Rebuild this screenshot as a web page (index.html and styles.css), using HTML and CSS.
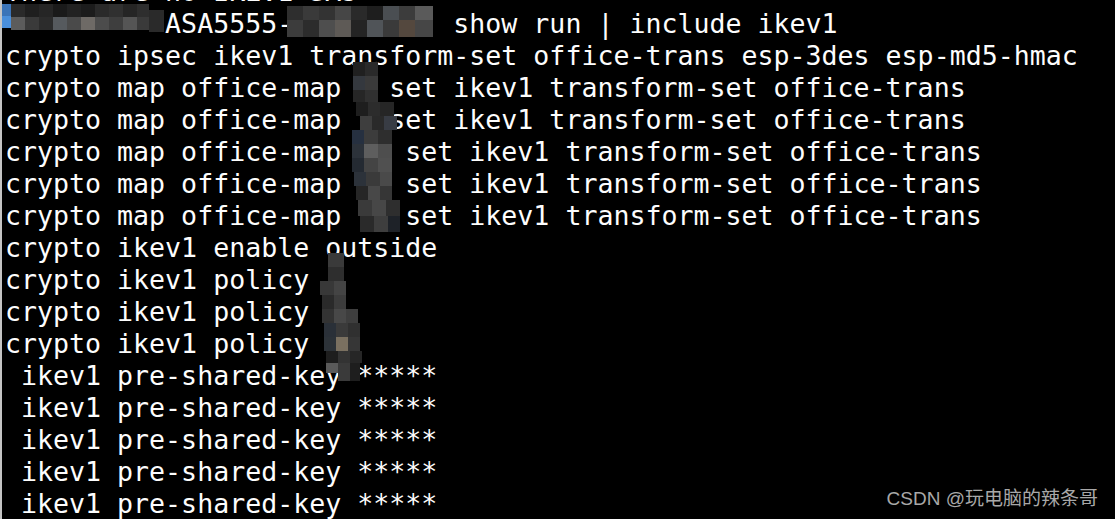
FILE: index.html
```html
<!DOCTYPE html>
<html lang="en">
<head>
<meta charset="utf-8">
<title>Terminal</title>
<link rel="stylesheet" href="styles.css">
</head>
<body>
<main class="terminal">
<pre class="output">There are no IKEv1 SAs
          ASA5555-          show run | include ikev1
crypto ipsec ikev1 transform-set office-trans esp-3des esp-md5-hmac
crypto map office-map   set ikev1 transform-set office-trans
crypto map office-map   set ikev1 transform-set office-trans
crypto map office-map    set ikev1 transform-set office-trans
crypto map office-map    set ikev1 transform-set office-trans
crypto map office-map    set ikev1 transform-set office-trans
crypto ikev1 enable outside
crypto ikev1 policy
crypto ikev1 policy
crypto ikev1 policy
 ikev1 pre-shared-key *****
 ikev1 pre-shared-key *****
 ikev1 pre-shared-key *****
 ikev1 pre-shared-key *****
 ikev1 pre-shared-key *****</pre>
<svg class="mosaic" width="1115" height="519" viewBox="0 0 1115 519" aria-hidden="true">
  <!-- cursor -->
  <rect x="1" y="4" width="10" height="12" fill="#3b74b8"/>
  <rect x="1" y="16" width="10" height="12" fill="#4a8fdb"/>
  <!-- hostname mosaic -->
  <rect x="11" y="4" width="14" height="13" fill="#2a2a2a"/>
  <rect x="25" y="4" width="14" height="13" fill="#1f1f1f"/>
  <rect x="39" y="4" width="14" height="13" fill="#262626"/>
  <rect x="53" y="4" width="14" height="13" fill="#1a1a1a"/>
  <rect x="67" y="4" width="14" height="13" fill="#222222"/>
  <rect x="81" y="4" width="14" height="13" fill="#1c1c1c"/>
  <rect x="95" y="4" width="14" height="13" fill="#2a2a2a"/>
  <rect x="109" y="4" width="14" height="13" fill="#303030"/>
  <rect x="123" y="4" width="14" height="13" fill="#252525"/>
  <rect x="137" y="4" width="12" height="13" fill="#2e2e2e"/>
  <rect x="11" y="17" width="14" height="13" fill="#5c5c5c"/>
  <rect x="25" y="17" width="14" height="13" fill="#3a3a3a"/>
  <rect x="39" y="17" width="14" height="13" fill="#2c2c2c"/>
  <rect x="53" y="17" width="14" height="13" fill="#565a5e"/>
  <rect x="67" y="17" width="14" height="13" fill="#4a4a4a"/>
  <rect x="81" y="17" width="14" height="13" fill="#6e6a66"/>
  <rect x="95" y="17" width="14" height="13" fill="#4c4c4c"/>
  <rect x="109" y="17" width="14" height="13" fill="#3e3e3e"/>
  <rect x="123" y="17" width="14" height="13" fill="#555555"/>
  <rect x="137" y="17" width="12" height="13" fill="#3a3a3a"/>
  <rect x="149" y="10" width="15" height="22" fill="#2a2a2a"/>
  <!-- suffix mosaic -->
  <rect x="287" y="6" width="16" height="14" fill="#2e2e2e"/>
  <rect x="303" y="6" width="16" height="14" fill="#3a3a3a"/>
  <rect x="319" y="6" width="16" height="14" fill="#333333"/>
  <rect x="335" y="6" width="16" height="14" fill="#464646"/>
  <rect x="351" y="6" width="16" height="14" fill="#2a2a2a"/>
  <rect x="367" y="6" width="16" height="14" fill="#1e1e1e"/>
  <rect x="383" y="6" width="16" height="14" fill="#4a4e52"/>
  <rect x="399" y="6" width="16" height="14" fill="#3c3c3c"/>
  <rect x="415" y="6" width="18" height="14" fill="#5a5a5a"/>
  <rect x="287" y="20" width="16" height="17" fill="#3c3c3c"/>
  <rect x="303" y="20" width="16" height="17" fill="#2c2c2c"/>
  <rect x="319" y="20" width="16" height="17" fill="#4e4e4e"/>
  <rect x="335" y="20" width="16" height="17" fill="#5e5a56"/>
  <rect x="351" y="20" width="16" height="17" fill="#242424"/>
  <rect x="367" y="20" width="16" height="17" fill="#505458"/>
  <rect x="383" y="20" width="16" height="17" fill="#3a3a3a"/>
  <rect x="399" y="20" width="16" height="17" fill="#54483e"/>
  <rect x="415" y="20" width="18" height="17" fill="#464646"/>
  <!-- crypto map numbers -->
  <rect x="353" y="62" width="12" height="14" fill="#202020"/>
  <rect x="365" y="62" width="13" height="14" fill="#2a2a2a"/>
  <rect x="353" y="76" width="12" height="14" fill="#34383e"/>
  <rect x="365" y="76" width="13" height="14" fill="#3a3a3a"/>
  <rect x="353" y="90" width="12" height="12" fill="#262626"/>
  <rect x="365" y="90" width="13" height="12" fill="#303030"/>
  <rect x="356" y="102" width="12" height="14" fill="#1e1e1e"/>
  <rect x="368" y="102" width="12" height="14" fill="#2c2c2c"/>
  <rect x="380" y="102" width="14" height="14" fill="#262626"/>
  <rect x="360" y="116" width="12" height="14" fill="#3e3e3e"/>
  <rect x="372" y="116" width="12" height="14" fill="#2a2a2a"/>
  <rect x="384" y="116" width="13" height="14" fill="#383c44"/>
  <rect x="352" y="130" width="12" height="14" fill="#263040"/>
  <rect x="364" y="130" width="14" height="14" fill="#3c3c3c"/>
  <rect x="378" y="130" width="14" height="14" fill="#2e2e2e"/>
  <rect x="352" y="144" width="12" height="14" fill="#2c323a"/>
  <rect x="364" y="144" width="14" height="14" fill="#5e5e5e"/>
  <rect x="378" y="144" width="14" height="14" fill="#4e4e4e"/>
  <rect x="352" y="158" width="12" height="14" fill="#242a32"/>
  <rect x="364" y="158" width="14" height="14" fill="#444444"/>
  <rect x="378" y="158" width="14" height="14" fill="#505050"/>
  <rect x="354" y="172" width="12" height="14" fill="#2c323a"/>
  <rect x="366" y="172" width="14" height="14" fill="#3a3a3a"/>
  <rect x="380" y="172" width="12" height="14" fill="#4a4a4a"/>
  <rect x="356" y="186" width="12" height="14" fill="#262626"/>
  <rect x="368" y="186" width="12" height="14" fill="#484848"/>
  <rect x="380" y="186" width="12" height="14" fill="#363636"/>
  <rect x="358" y="200" width="14" height="16" fill="#3a3a3a"/>
  <rect x="372" y="200" width="14" height="16" fill="#474747"/>
  <rect x="386" y="200" width="14" height="16" fill="#2e2e2e"/>
  <rect x="360" y="216" width="14" height="16" fill="#2a2a2a"/>
  <rect x="374" y="216" width="14" height="16" fill="#3e3e3e"/>
  <rect x="388" y="216" width="12" height="16" fill="#1e2228"/>
  <!-- policy numbers -->
  <rect x="328" y="253" width="16" height="14" fill="#3a3a3a"/>
  <rect x="328" y="267" width="16" height="14" fill="#2e2e2e"/>
  <rect x="320" y="281" width="14" height="14" fill="#383838"/>
  <rect x="334" y="281" width="12" height="14" fill="#444444"/>
  <rect x="322" y="295" width="12" height="14" fill="#2a2a2a"/>
  <rect x="334" y="295" width="12" height="14" fill="#3c3c3c"/>
  <rect x="322" y="309" width="12" height="14" fill="#333333"/>
  <rect x="334" y="309" width="12" height="14" fill="#484848"/>
  <rect x="346" y="309" width="12" height="14" fill="#3e3e3e"/>
  <rect x="324" y="323" width="12" height="14" fill="#2a3038"/>
  <rect x="336" y="323" width="12" height="14" fill="#3a3a3a"/>
  <rect x="348" y="323" width="12" height="14" fill="#303030"/>
  <rect x="324" y="337" width="12" height="14" fill="#2c3238"/>
  <rect x="336" y="337" width="12" height="14" fill="#7a7060"/>
  <rect x="348" y="337" width="12" height="14" fill="#363636"/>
  <rect x="326" y="351" width="12" height="12" fill="#1e1e1e"/>
  <rect x="338" y="351" width="12" height="12" fill="#333333"/>
  <rect x="350" y="351" width="12" height="12" fill="#262626"/>
  <rect x="326" y="363" width="12" height="10" fill="#5a5a5a"/>
  <rect x="338" y="363" width="12" height="18" fill="#3a3a3a"/>
  <rect x="350" y="363" width="10" height="18" fill="#1e1e1e"/>
</svg>
<p class="watermark">CSDN @玩电脑的辣条哥</p>
</main>
</body>
</html>
```

FILE: styles.css
```css
html, body {
  margin: 0;
  padding: 0;
  background: #000;
}

.terminal {
  position: relative;
  width: 1115px;
  height: 519px;
  overflow: hidden;
  background: #000;
  border-left: 2px solid #c4c4c4;
  box-sizing: border-box;
}

.output {
  margin: -24px 0 0 0;
  padding: 0 0 0 3px;
  font-family: "DejaVu Sans Mono", "Liberation Mono", monospace;
  font-size: 26.6px;
  line-height: 32px;
  color: #fdfdfd;
  white-space: pre;
}

.mosaic {
  position: absolute;
  left: -2px;
  top: 0;
  pointer-events: none;
}

.watermark {
  position: absolute;
  right: 17px;
  bottom: 11px;
  margin: 0;
  font-family: "Liberation Sans", "Noto Sans CJK SC", sans-serif;
  font-size: 19px;
  line-height: 19px;
  color: #a8a8a8;
}
```
